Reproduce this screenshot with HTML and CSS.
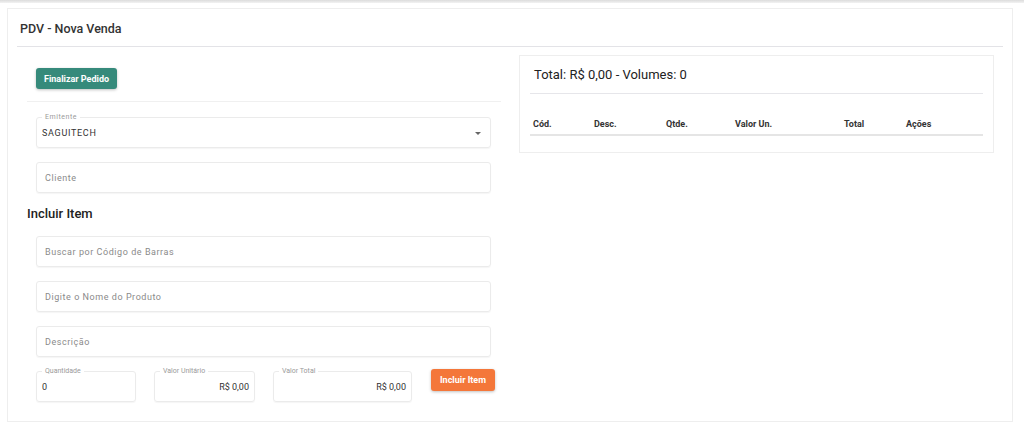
FILE: index.html
```html
<html>
  <head>
    <title>PDV - Nova Venda</title>
    <meta name="viewport" content="width=device-width, initial-scale=1">
    <link rel="stylesheet" href="styles.css">
  </head>
  <body>
    <div class="topbar"></div>
    <div class="card">
      <div class="card-head">PDV - Nova Venda</div>
      <div class="card-body">
        <div class="left">
          <div class="actions">
            <button class="btn btn-teal">Finalizar Pedido</button>
          </div>
          <div class="fields top-fields">
            <div class="field select">
              <span class="label">Emitente</span>
              <span class="value caps">SAGUITECH</span>
              <span class="caret"></span>
            </div>
            <div class="field"><span class="ph">Cliente</span></div>
          </div>
          <h3 class="section">Incluir Item</h3>
          <div class="fields">
            <div class="field"><span class="ph">Buscar por Código de Barras</span></div>
            <div class="field"><span class="ph">Digite o Nome do Produto</span></div>
            <div class="field"><span class="ph">Descrição</span></div>
            <div class="row">
              <div class="field qtd">
                <span class="label">Quantidade</span>
                <span class="value">0</span>
              </div>
              <div class="field unit right-text">
                <span class="label">Valor Unitário</span>
                <span class="value">R$ 0,00</span>
              </div>
              <div class="field total right-text">
                <span class="label">Valor Total</span>
                <span class="value">R$ 0,00</span>
              </div>
              <button class="btn btn-orange">Incluir Item</button>
            </div>
          </div>
        </div>
        <div class="right">
          <div class="summary">
            <div class="summary-title">Total: R$ 0,00 - Volumes: 0</div>
            <table class="items">
              <tr>
                <th class="c1">Cód.</th>
                <th class="c2">Desc.</th>
                <th class="c3">Qtde.</th>
                <th class="c4">Valor Un.</th>
                <th class="c5">Total</th>
                <th>Ações</th>
              </tr>
            </table>
          </div>
        </div>
      </div>
    </div>
  </body>
</html>
```

FILE: styles.css
```css
body { margin: 0; font-family: Roboto, "Liberation Sans", Arial, sans-serif; background: #fff; color: #333; }
.topbar { height: 3px; background: linear-gradient(#dcdcdc, #f2f2f2); }
.card {
  margin: 5px 11px 0 7px;
  height: 414px;
  border: 1px solid #eeeeee;
  box-sizing: border-box;
  padding: 0 9px;
}
.card-head {
  font-size: 12.5px;
  font-weight: 500;
  color: #333;
  padding: 12px 3px 0;
  height: 25px;
  border-bottom: 1px solid #e3e3e7;
}
.card-body { display: flex; }
.left { width: 474px; padding: 0 10px; }
.actions {
  padding: 21px 9px 12px;
  border-bottom: 1px solid #f0f0f0;
}
.btn {
  border: 0;
  border-radius: 3px;
  color: #fff;
  font-family: Roboto, "Liberation Sans", Arial, sans-serif;
  font-size: 9px;
  font-weight: 700;
  cursor: pointer;
  box-shadow: 0 1px 3px rgba(0,0,0,0.25);
}
.btn-teal { background: #368a7b; width: 81px; height: 21px; padding: 0; display: block; }
.btn-orange { background: #f4773a; width: 64px; height: 22px; padding: 0; margin-top: -2px; flex-shrink: 0; }
.fields { padding: 0 10px 0 9px; display: flex; flex-direction: column; gap: 14px; }
.top-fields { padding-top: 15px; }
.field {
  position: relative;
  height: 31px;
  border: 1px solid #ebebeb;
  border-radius: 3px;
  box-shadow: 0 1px 1px rgba(0,0,0,0.04);
  box-sizing: border-box;
  display: flex;
  align-items: center;
  padding: 0 8px;
  font-size: 9px;
  letter-spacing: 0.55px;
}
.ph { color: #8a8a8a; }
.value { color: #333; }
.caps { font-weight: 400; color: #333; letter-spacing: 0.7px; }
.label {
  position: absolute;
  top: -5px;
  left: 5px;
  padding: 0 3px;
  background: #fff;
  font-size: 7px;
  color: #9a9a9a;
  line-height: 9px;
}
.select { padding-left: 5px; }
.caret {
  position: absolute;
  right: 9px;
  top: 14px;
  border-left: 3px solid transparent;
  border-right: 3px solid transparent;
  border-top: 3px solid #666;
}
.section { font-size: 13px; font-weight: 500; margin: 0; padding: 13px 0 15px; color: #222; }
.row { display: flex; gap: 18px; align-items: flex-start; }
.row .field { padding: 0 5px; letter-spacing: 0; flex-shrink: 0; }
.qtd { width: 100px; }
.unit { width: 101px; }
.total { width: 139px; }
.row .btn { margin-left: 1px; }
.right-text { justify-content: flex-end; }
.right { flex: 1; padding: 8px 0 0 8px; }
.summary {
  width: 475px;
  height: 98px;
  border: 1px solid #eeeeee;
  box-sizing: border-box;
  padding: 0 10px;
}
.summary-title {
  font-size: 13px;
  font-weight: 400;
  color: #222;
  padding: 11px 4px 0;
  height: 26px;
  border-bottom: 1px solid #e6e6ea;
}
.items { width: 100%; border-collapse: collapse; margin-top: 25px; }
.items th {
  font-size: 9px;
  font-weight: 700;
  text-align: left;
  padding: 0 3px 5px;
  border-bottom: 2px solid #e5e5e5;
  color: #333;
}
.c1 { width: 55px; }
.c2 { width: 66px; }
.c3 { width: 63px; }
.c4 { width: 103px; }
.c5 { width: 56px; }
```
